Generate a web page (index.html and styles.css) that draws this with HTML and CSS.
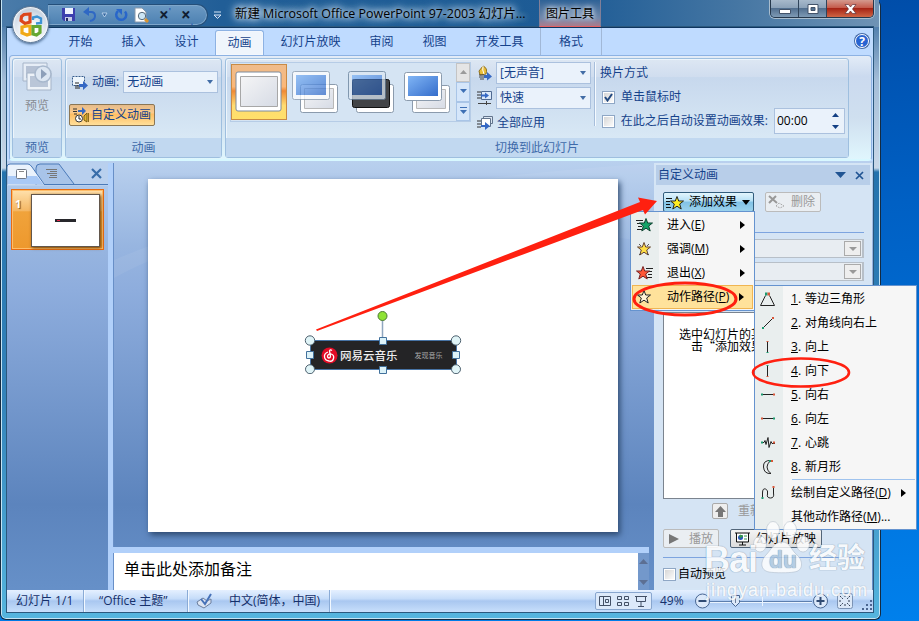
FILE: index.html
```html
<!DOCTYPE html>
<html lang="zh-CN">
<head>
    <meta charset="utf-8">
    <title>PowerPoint</title>
    <link rel="stylesheet" href="styles.css">
</head>
<body>
<div class="desktop">
    <div class="window">
        <div class="title-bar">
            <div class="quick-bar">
                <svg width="16" height="16"><path d="M1 1h13v13H3l-2-2z" fill="#3b3fae"/><path d="M4 1h8v6H4z" fill="#eef3ff"/><path d="M4 10h7v4H4z" fill="#c5cbe8"/><path d="M5 11h2v3H5z" fill="#222a66"/></svg>
                <svg width="14" height="16"><path d="M3 5h5q4 0 4 4t-5 5" fill="none" stroke="#2f68c4" stroke-width="2"/><path d="M0 5l6-5v9z" fill="#2f68c4"/></svg>
                <svg class="drop" width="7" height="6"><path d="M1 1h5L3.500 5z" fill="#34659f" stroke="#c5dcf2" stroke-width=".8"/></svg>
                <svg width="14" height="16"><path d="M11 4.500A5 5 0 1 1 4 4" fill="none" stroke="#2866ca" stroke-width="2.500"/><path d="M2 2h6v6z" fill="#2866ca"/></svg>
                <svg width="16" height="16"><path d="M1 1h7l4 4v10H1z" fill="#fff" stroke="#8898aa"/><circle cx="8" cy="9" r="3.700" fill="#cce5f4" stroke="#596b7b"/><path d="M11 12l3 3" stroke="#d79432" stroke-width="3"/></svg>
                <span class="script-x first">×<sup>'</sup></span>
                <span class="script-x">×<sub>.</sub></span>
            </div>
            <svg class="more" width="9" height="9"><path d="M1 1h7M1 4h7L4.500 7.500z" fill="#34659f" stroke="#d5e5f5"/></svg>
            <div class="caption">新建 Microsoft Office PowerPoint 97-2003 幻灯片...</div>
            <div class="context-title">图片工具</div>
            <div class="window-buttons">
                <span class="min"><svg width="12" height="10"><path d="M.5 5.500h11v4H.5z" fill="#fff" stroke="#43536a"/></svg></span>
                <span class="max"><svg width="12" height="10"><path d="M1 .5h10v9H1zM4 3.500h4v3H4z" fill="#fff" fill-rule="evenodd" stroke="#43536a"/></svg></span>
                <span class="close"><svg width="13" height="10"><path d="M1 .5h3.500l2 2.500 2-2.500H12L8.500 5 12 9.500H8.500l-2-2.500-2 2.500H1L4.500 5z" fill="#fff" stroke="#603038" stroke-width=".7"/></svg></span>
            </div>
        </div>
        <div class="client">
            <div class="tabs">
                <span class="tab">开始</span>
                <span class="tab">插入</span>
                <span class="tab">设计</span>
                <span class="tab active">动画</span>
                <span class="tab">幻灯片放映</span>
                <span class="tab">审阅</span>
                <span class="tab">视图</span>
                <span class="tab">开发工具</span>
                <span class="tab context">格式</span>
                <span class="help">?</span>
            </div>
            <div class="ribbon">
                <div class="group preview">
                    <div class="group-body">
                        <svg width="31" height="30"><path d="M1 1h24v18H1z" fill="#e6edf6" stroke="#a5b4c8"/><path d="M4 4h18v12H4z" fill="#b5c1d4"/><path d="M5 11h24v17H5z" fill="#edf2f8" stroke="#a5b4c8"/><path d="M8 14h18v11H8z" fill="#bac6d8"/><circle cx="21" cy="12" r="8" fill="#dce6f2" stroke="#a8b8cd" stroke-width="1.500"/><path d="M19 7l6 5-6 5z" fill="#8d9fb9"/></svg>
                        <span>预览</span>
                    </div>
                    <div class="group-label">预览</div>
                </div>
                <div class="group animation">
                    <div class="group-body">
                        <div class="line">
                            <svg width="17" height="16"><path d="M1.500 2.500h12v9h-12z" fill="#eef6fd" stroke="#375c8c" stroke-dasharray="2 1"/><path d="M4 9h4M4 12h4M4 14h5" stroke="#222"/><path d="M8 10h4V7l5 4.500-5 4.500v-3H8z" fill="#3568c4"/></svg>
                            <span>动画:</span>
                            <div class="select anim-select">无动画<i></i></div>
                        </div>
                        <div class="custom-button">
                            <svg width="17" height="16"><path d="M0 2h4M0 4.500h4M1 7h3" stroke="#333"/><path d="M5 3h4V0l4 4-4 4V5H5z" fill="#3568c4"/><circle cx="6" cy="11.500" r="3.500" fill="#fff" stroke="#333"/><path d="M6 9v3h2" fill="none" stroke="#222"/><path d="M11 9l3-3v9l-3-2z" fill="#e2b72f" stroke="#7a5c15"/><path d="M15.500 6v9" stroke="#8e6d1a"/></svg>
                            <span>自定义动画</span>
                        </div>
                    </div>
                    <div class="group-label">动画</div>
                </div>
                <div class="group transition">
                    <div class="group-body">
                        <div class="gallery">
                            <div class="thumb picked"><svg width="48" height="44"><rect x="1" y="2" width="45" height="39" rx="2" fill="#fff" stroke="#7d8b9d"/><path d="M5.500 6.500h37v30h-37z" fill="url(#paper)" stroke="#a7a7a7"/></svg></div>
                            <svg class="thumb-art" width="48" height="44"><rect x="9.500" y="14.500" width="37" height="28" rx="2" fill="#fff" stroke="#8b9bad"/><path d="M13.500 18.500h29v20h-29z" fill="url(#paper)" stroke="#b8b8b8"/><g opacity=".75"><rect x="1.500" y="1.500" width="37" height="28" rx="2" fill="#fff" stroke="#8b9bad"/><path d="M5 5h30v20H5z" fill="url(#blue)"/></g></svg>
                            <svg class="thumb-art" width="48" height="44"><rect x="9.500" y="14.500" width="37" height="28" rx="2" fill="#fff" stroke="#8b9bad"/><rect x="5.500" y="9.500" width="37" height="28" rx="2" fill="#424447" stroke="#111"/><g opacity=".75"><rect x="1.500" y="1.500" width="37" height="28" rx="2" fill="#dce7f2" stroke="#667f99"/><path d="M5 5h30v20H5z" fill="url(#blue)"/><path d="M5 9h30v16H5z" fill="#1d427b" opacity=".5"/></g></svg>
                            <svg class="thumb-art" width="48" height="44"><rect x="9.500" y="15.500" width="37" height="27" rx="2" fill="#fff" stroke="#8b9bad"/><path d="M13.500 19.500h29v19h-29z" fill="url(#paper)" stroke="#b8b8b8"/><rect x="1.500" y="2.500" width="37" height="28" rx="2" fill="#fff" stroke="#8b9bad"/><path d="M5 6h30v20H5z" fill="url(#blue)"/></svg>
                            <div class="gallery-scroll">
                                <span class="off"><svg width="7" height="5"><path d="M0 4l3.500-4L7 4z" fill="#9b9b9b"/></svg></span>
                                <span><svg width="7" height="5"><path d="M0 0h7L3.500 4z" fill="#3e70b5"/></svg></span>
                                <span><svg width="7" height="8"><path d="M0 .5h7" stroke="#3e70b5"/><path d="M0 3h7L3.500 7z" fill="#3e70b5"/></svg></span>
                            </div>
                        </div>
                        <div class="options">
                            <div class="line">
                                <svg width="16" height="16"><path d="M2 6l4-5q5 2 3 8l-6 1z" fill="#e9bd38" stroke="#8e6f1d"/><path d="M6 1q-1 4 1 8" fill="none" stroke="#fff"/><path d="M2 10h5M2 12h5M3 14h4" stroke="#444"/><path d="M7 10h3V7l5 4.500-5 4V13H7z" fill="#3568c4"/></svg>
                                <div class="select">[无声音]<i></i></div>
                            </div>
                            <div class="line">
                                <svg width="16" height="16"><path d="M0 2h4M0 5h4M0 8h4" stroke="#333"/><path d="M4.500 1.500h10v8h-10z" fill="#dbe9fa" stroke="#506a91"/><path d="M4 4.500h4V2.500l4 3-4 3v-2H4z" fill="#3568c4"/><path d="M1 13.500h13M9.500 11v4" stroke="#444"/></svg>
                                <div class="select">快速<i></i></div>
                            </div>
                            <div class="line apply">
                                <svg width="17" height="16"><path d="M6.500 1.500h9v7h-9z" fill="#dbe6f2" stroke="#62748c"/><path d="M4.500 3.500h9v8h-9z" fill="#fff" stroke="#62748c"/><path d="M0 6h4M0 9h4M0 12h4" stroke="#333"/><path d="M4 10h4V7l5 4-5 4v-3H4z" fill="#3568c4"/></svg>
                                <span>全部应用</span>
                            </div>
                        </div>
                        <div class="advance">
                            <div>换片方式</div>
                            <div class="line"><span class="check"><svg width="9" height="9"><path d="M1 4l2.500 3.500L8 1" fill="none" stroke="#234a80" stroke-width="2"/></svg></span>单击鼠标时</div>
                            <div class="line"><span class="check"></span><span>在此之后自动设置动画效果:</span>
                                <div class="time">00:00<svg width="7" height="17"><path d="M0 4l3.500-4L7 4zM0 12h7l-3.500 4z" fill="#123f84"/></svg></div>
                            </div>
                        </div>
                    </div>
                    <div class="group-label">切换到此幻灯片</div>
                </div>
            </div>
            <div class="workspace">
                <div class="slides">
                    <div class="slides-tabs">
                        <svg width="101" height="22"><path d="M29 21.500V5q0-4 4-4h19l15 20" fill="#a8c4e9" stroke="#4a7ab9"/><path d="M0 21.500V4q0-3 3-3h18q2 0 4 3l12 17" fill="#eaf2fc" stroke="#4a7ab9"/><path d="M1 13h29l6 8H1z" fill="#a9c9f6"/><rect x="9.500" y="6.500" width="10" height="9" rx="1" fill="#fff" stroke="#6f7887"/><path d="M12 8.500h5" stroke="#888"/><path d="M39 6.500h11M43 8.500h7M40 10.500h10M43 12.500h7M42 14.500h8" stroke="#777"/><path d="M37 21.500h64" stroke="#4a7ab9"/><path d="M85 6l9 9M94 6l-9 9" stroke="#376da9" stroke-width="2.200"/></svg>
                    </div>
                    <div class="slide-item">
                        <b>1</b>
                        <div class="mini"><span><i></i></span></div>
                    </div>
                </div>
                <div class="editor">
                    <div class="canvas">
                        <svg class="waves" width="540" height="384"><path d="M0 97Q160 27 540 0v80Q170 20 0 115z" fill="#fff" opacity=".06"/></svg>
                        <div class="slide">
                            <div class="banner">
                                <svg width="17" height="17"><circle cx="8.500" cy="8.500" r="8" fill="#e20b25"/><path d="M11 3.500Q9 2 8.500 4l1 5q0 2-1.500 2T6.500 9Q7 6.500 10 7q3.500 1 2.500 4.500T8 14Q4 13.500 3.500 10T7 5" fill="none" stroke="#fff" stroke-width="1.300"/></svg>
                                <b>网易云音乐</b>
                                <small>发现音乐</small>
                                <svg class="handles" width="158" height="66"><path d="M78.500 12v24" stroke="#8fa6bf" stroke-width="1.500"/><path d="M6.500 32.500h146v29h-146z" fill="none" stroke="#4773a5"/><circle cx="78.500" cy="8" r="4.500" fill="#8fe335" stroke="#4c7a33"/><g fill="#e0f4f7" stroke="#4d606e"><circle cx="6" cy="32.500" r="4.700"/><circle cx="152" cy="32.500" r="4.700"/><circle cx="6" cy="61.200" r="4.500"/><circle cx="152" cy="61.200" r="4.500"/></g><path d="M75.500 29.500h7v7h-7zM75.500 58.500h7v7h-7zM2.500 43.500h7v7h-7zM148.500 43.500h7v7h-7z" fill="#dcf2f8" stroke="#42719c"/></svg>
                            </div>
                        </div>
                    </div>
                    <div class="notes">
                        <div class="notes-text">单击此处添加备注</div>
                        <div class="notes-scroll">
                            <svg width="9" height="5"><path d="M0 5l4.500-5L9 5z" fill="#5c6f93"/></svg>
                            <svg width="9" height="5"><path d="M0 0h9L4.500 5z" fill="#5c6f93"/></svg>
                        </div>
                    </div>
                </div>
                <div class="pane">
                    <div class="pane-head">
                        <span>自定义动画</span>
                        <svg width="11" height="6"><path d="M0 0h11L5.500 6z" fill="#205493"/></svg>
                        <svg width="9" height="9"><path d="M1 1l7 7M8 1L1 8" stroke="#205493" stroke-width="1.700"/></svg>
                    </div>
                    <div class="pane-body">
                        <div class="pane-buttons">
                            <div class="add"><svg width="18" height="15"><path d="M0 3.500h6M0 6.500h4M0 9.500h4M0 12.500h5" stroke="#111"/><use href="#star" x="4" y="1" fill="#ffed23" stroke="#222"/></svg><span>添加效果</span><svg width="8" height="5"><path d="M0 0h8L4 5z"/></svg></div>
                            <div class="grey-button"><svg width="17" height="14"><path d="M1 1l8 7M8 1L1 8" stroke="#999" stroke-width="2"/><path d="M8 11l3-3 5 3-4 2z" fill="none" stroke="#aaa" stroke-dasharray="2 1"/></svg><span>删除</span></div>
                        </div>
                        <div class="combo first"><span><i></i></span></div>
                        <div class="combo"><span><i></i></span></div>
                        <div class="combo"><span><i></i></span></div>
                        <div class="list"><p>选中幻灯片的某</p><p>击“添加效果</p></div>
                        <div class="reorder"><span class="arrow"><svg width="11" height="11"><path d="M5.500 0l5.500 6H8v5H3V6H0z" fill="#777"/></svg></span><span>重新</span></div>
                        <div class="play-row">
                            <div class="grey-button play"><svg width="10" height="10"><path d="M0 0l10 5-10 5z" fill="#777"/></svg><span>播放</span></div>
                            <div class="show"><svg width="17" height="14"><path d="M3 2h11v7H3z" fill="#fff"/><path d="M1 1h15M2.500 1v9h12V1M8.500 10v3M5 13h7" fill="none" stroke="#111"/><circle cx="6.500" cy="5.500" r="2.500" fill="#2752bb"/><path d="M6 3l3 1-3 2zM10 4h3M10 7h3" fill="#35a055" stroke="#34924a"/></svg><span>幻灯片放映</span></div>
                        </div>
                        <div class="auto"><span class="check"></span>自动预览</div>
                    </div>
                </div>
            </div>
            <div class="status">
                <span class="cell page">幻灯片 1/1</span>
                <span class="cell theme">“Office 主题”</span>
                <span class="cell lang"><svg width="17" height="16"><path d="M1 9l6-4 4 3 4-2v4l-7 5-6-3z" fill="#dce4f2" stroke="#6c7f9e"/><path d="M5 6l4 5 6-10" fill="none" stroke="#4772b8" stroke-width="2"/></svg>中文(简体，中国)</span>
                <span class="views">
                    <svg width="18" height="16"><path d="M3.500 3.500h11v9h-11zM7.500 3.500v9M9.500 6.500h3v3h-3z" fill="none" stroke="#435066"/></svg>
                    <svg width="18" height="16"><path d="M3.500 3.500h4v3h-4zM10.500 3.500h4v3h-4zM3.500 9.500h4v3h-4zM10.500 9.500h4v3h-4z" fill="none" stroke="#435066"/></svg>
                    <svg width="19" height="16"><path d="M3 3.500h12M4.500 3.500v5h9v-5M9 9v4M6 13.500h6" fill="none" stroke="#435066"/></svg>
                </span>
                <span class="percent">49%</span>
                <svg class="zoom" width="134" height="18"><path d="M16 9.500h102" stroke="#5d7fae"/><path d="M16 10.500h102" stroke="#e9f3ff"/><path d="M68.500 5v9" stroke="#e9f3ff"/><g fill="#dce9fa" stroke="#486692"><circle cx="8.500" cy="9" r="7"/><circle cx="126.500" cy="9" r="7"/><path d="M37.500 3.500h8v7l-4 4-4-4z"/></g><path d="M4.500 9h8M122.500 9h8M126.500 5v8" stroke="#304b73" stroke-width="2"/><path d="M41.500 6v5" stroke="#6c7e9a"/></svg>
                <svg width="16" height="16"><rect x=".5" y=".5" width="15" height="15" rx="2" fill="#dce8f7" stroke="#7b93b5"/><path d="M3 3l3 3M13 3l-3 3M3 13l3-3M13 13l-3-3M8 2v3M8 11v3M2 8h3M11 8h3" stroke="#303d52" stroke-dasharray="2 1"/></svg>
                <svg class="grip" width="12" height="12"><path d="M9 2h2M5 6h2M9 6h2M1 10h2M5 10h2M9 10h2" stroke="#4b6691" stroke-width="2"/></svg>
            </div>
        </div>
        <div class="office-button">
            <svg width="24" height="26"><g fill="none" stroke-width="3.200"><path d="M5 2.500l6-.5v8l-5 1.500-4-3 .5-4z" stroke="#dc471d"/><path d="M14 8V5.500l4-1 4 2v4.500l-5 .5" stroke="#3d93d4" stroke-width="2.400"/><path d="M8 14l-5 1v6l5 2 3-1v-8z" stroke="#f0a918"/><path d="M14 14.500h7v6l-3.500 2.500-3.500-1z" stroke="#65a833"/></g></svg>
        </div>
    </div>

    <div class="menu main-menu">
        <div class="item"><span class="icon"><svg width="18" height="15"><path d="M0 2.500h7M1 5.500h5M2 8.500h4M1 11.500h5" stroke="#222"/><use href="#star" x="3" y="0" fill="#14a368" stroke="#143"/></svg></span>进入(<u>E</u>)<i></i></div>
        <div class="item"><span class="icon"><svg width="18" height="15"><use href="#star" x="1" y="0" fill="#ffdf46" stroke="#643"/><path d="M3 2l2 2M13 2l-2 2M3 13l2-2M13 13l-2-2" stroke="#555"/></svg></span>强调(<u>M</u>)<i></i></div>
        <div class="item"><span class="icon"><svg width="18" height="15"><path d="M10 2.500h7M11 5.500h5M12 8.500h4M10 11.500h6" stroke="#222"/><use href="#star" x="0" y="0" fill="#ff5636" stroke="#722"/></svg></span>退出(<u>X</u>)<i></i></div>
        <div class="item hot"><span class="icon"><svg width="18" height="15"><use href="#star" x="1" y="0" fill="#fff3d6" stroke="#222"/></svg></span>动作路径(<u>P</u>)<i></i></div>
    </div>

    <div class="menu sub-menu">
        <div class="item"><span class="icon"><svg width="16" height="16"><path d="M5.500 4.500L.500 14.500h14l-5-10" fill="none" stroke="#222"/><path d="M5 3h2.500" stroke="#1c9b70" stroke-width="3"/><path d="M7.500 3H10" stroke="#d95638" stroke-width="3"/></svg></span><u>1</u>.<span class="name">等边三角形</span></div>
        <div class="item"><span class="icon"><svg width="16" height="16"><path d="M3 13L13 3" stroke="#222"/><path d="M2 13h2" stroke="#1c9b70" stroke-width="2"/><path d="M12 3h2" stroke="#d95638" stroke-width="2"/></svg></span><u>2</u>.<span class="name">对角线向右上</span></div>
        <div class="item"><span class="icon"><svg width="16" height="16"><path d="M7.500 2v12" stroke="#222"/><path d="M6.500 2.500h2" stroke="#d95638"/><path d="M6.500 13.500h2" stroke="#1c9b70"/></svg></span><u>3</u>.<span class="name">向上</span></div>
        <div class="item"><span class="icon"><svg width="16" height="16"><path d="M7.500 2v12" stroke="#222"/><path d="M6.500 2.500h2" stroke="#1c9b70"/><path d="M6.500 13.500h2" stroke="#d95638"/></svg></span><u>4</u>.<span class="name">向下</span></div>
        <div class="item"><span class="icon"><svg width="16" height="16"><path d="M2 7.500h12" stroke="#222"/><path d="M1 7.500h2" stroke="#1c9b70" stroke-width="2"/><path d="M13 7.500h2" stroke="#d95638" stroke-width="2"/></svg></span><u>5</u>.<span class="name">向右</span></div>
        <div class="item"><span class="icon"><svg width="16" height="16"><path d="M2 7.500h12" stroke="#222"/><path d="M1 7.500h2" stroke="#d95638" stroke-width="2"/><path d="M13 7.500h2" stroke="#1c9b70" stroke-width="2"/></svg></span><u>6</u>.<span class="name">向左</span></div>
        <div class="item"><span class="icon"><svg width="16" height="16"><path d="M1 7.500h3l1-2 1 4 2-7 1 10 2-6 1 2h3" fill="none" stroke="#222"/><path d="M1 7.500h2" stroke="#1c9b70" stroke-width="2"/><path d="M13 7.500h2" stroke="#d95638" stroke-width="2"/></svg></span><u>7</u>.<span class="name">心跳</span></div>
        <div class="item"><span class="icon"><svg width="16" height="16"><path d="M11 1.500Q3 1 3.500 8T11 14.500Q7 12 7 8t4-6.500z" fill="none" stroke="#222"/><path d="M9 2h2" stroke="#1c9b70" stroke-width="2"/><path d="M11 2h2" stroke="#d95638" stroke-width="2"/></svg></span><u>8</u>.<span class="name">新月形</span></div>
        <div class="divider"></div>
        <div class="item"><span class="icon"><svg width="16" height="16"><path d="M2.500 13V8q0-5 3-4t2 5 3 4 3-5V2" fill="none" stroke="#222"/><path d="M1.500 13h2" stroke="#1c9b70" stroke-width="2"/><path d="M12.500 2h2" stroke="#d95638" stroke-width="2"/></svg></span>绘制自定义路径(<u>D</u>)<i></i></div>
        <div class="item"><span class="icon"></span>其他动作路径(<u>M</u>)...</div>
    </div>

    <div class="watermark">
        <svg width="60" height="54"><g fill="#fff" stroke="#a9b6c3" stroke-width=".6"><ellipse cx="20" cy="9" rx="6.500" ry="8.500"/><ellipse cx="37" cy="9" rx="6.500" ry="8.500"/><ellipse cx="7" cy="23" rx="6.500" ry="8"/><ellipse cx="50" cy="23" rx="6.500" ry="8"/><path d="M29 21c8 0 9 8 15 13s7 16-3 17c-5 1-19 1-25 0-10-2-8-12-3-17s8-13 16-13z"/></g></svg>
        <span class="bai">Bai</span><span class="du">du</span><span class="jingyan">经验</span>
        <span class="url">jingyan.baidu.com</span>
    </div>

    <!-- red marks -->
    <svg class="marks" width="919" height="621">
        <path d="M316 329.500L640 202l-2-4.500 19 3.500-12 13.500-2-4.500L317 331z" fill="#ff2010"/>
        <ellipse cx="685" cy="299" rx="51" ry="16" fill="none" stroke="#ff2010" stroke-width="3"/>
        <ellipse cx="801" cy="372.500" rx="48" ry="14" fill="none" stroke="#ff2010" stroke-width="2.600"/>
    </svg>
</div>

<svg class="defs" width="0" height="0">
    <defs>
        <linearGradient id="paper" x2="1" y2="1"><stop stop-color="#f5f5f6"/><stop offset="1" stop-color="#d6dbe5"/></linearGradient>
        <linearGradient id="blue" x2="1" y2="1"><stop stop-color="#80b5f5"/><stop offset="1" stop-color="#356dcb"/></linearGradient>
        <path id="star" d="M7 .5l1.700 4.500h4.800l-3.800 3 1.500 5L7 10.200 2.800 13l1.500-5L.5 5h4.800z"/>
    </defs>
</svg>
</body>
</html>
```
FILE: styles.css
```css
* {
    box-sizing: border-box;
}
body {
    margin: 0;
    overflow: hidden;
    font: 12px/16px "Open Sans", "Noto Sans CJK SC", sans-serif;
    color: #15428b;
    white-space: nowrap;
}
svg {
    flex: none;
    display: block;
}
i {
    font-style: normal;
}
.desktop {
    position: relative;
    width: 919px;
    height: 621px;
    overflow: hidden;
    background: linear-gradient(175deg, #00469f, #0060c4 40%, #0080ec);
}
.defs {
    position: absolute;
}
.window {
    position: relative;
    width: 881px;
    height: 620px;
    padding: 0 8px 8px 6px;
    border: 1px solid #142b42;
    border-top: 0;
    border-radius: 0 6px 6px 6px;
    background: linear-gradient(#2a6299, #a4bdd8 80px, #c9d8e8 168px, #2573ad 172px, #3484bb 400px, #55b5de);
    box-shadow: inset 0 0 0 1px #c5e4f4;
}

/* 标题栏 */
.title-bar {
    display: flex;
    height: 27px;
    margin: 0 -7px 0 -5px;
    padding-left: 46px;
    background: linear-gradient(90deg, #4a7ba9, #215e97 25%, #1d5b95 65%, #4878a4 85%, #6f93b5);
}
.quick-bar {
    display: flex;
    align-items: center;
    gap: 6px;
    width: 160px;
    height: 22px;
    margin-top: 4px;
    padding: 0 5px 0 13px;
    border: 1px solid #244f7a;
    border-left: 0;
    border-radius: 0 11px 11px 0;
    background: linear-gradient(#6c9ac4, #4c80b1);
    box-shadow: inset 0 0 0 1px #7ea6ca;
}
.quick-bar .drop {
    margin-left: -2px;
}
.script-x {
    width: 16px;
    font-size: 17px;
    font-weight: bold;
    line-height: 16px;
    color: #101d31;
}
.script-x.first {
    margin-left: 3px;
}
.script-x sup, .script-x sub {
    font-size: 8px;
    line-height: 0;
    color: #2653ab;
}
.more {
    margin: 11px 0 0 5px;
}
.caption {
    width: 296px;
    margin-left: 10px;
    padding-left: 3px;
    font-size: 12.450px;
    line-height: 27px;
    color: #000;
    text-shadow: 0 0 6px #fff, 0 0 9px #cbe1f4, 0 0 12px #cbe1f4;
}
.context-title {
    width: 62px;
    margin-left: 11px;
    border: 1px solid #817f98;
    border-width: 0 1px;
    border-bottom: 1px solid #e45f61;
    background: linear-gradient(#2f6296, #7088ab 70%, #a37d90 95%);
    line-height: 27px;
    text-align: center;
    color: #000;
    text-shadow: 0 0 5px #fff, 0 0 7px #e5eef8;
}
.window-buttons {
    display: flex;
    width: 104px;
    height: 18px;
    margin: 0 5px 0 auto;
    border: 1px solid #26384c;
    border-top: 0;
    border-radius: 0 0 5px 5px;
    box-shadow: 0 0 0 1px #a9bdce;
    overflow: hidden;
}
.window-buttons span {
    display: flex;
    align-items: center;
    justify-content: center;
    width: 28px;
    background: linear-gradient(#a7b9cb, #8ca2b9 45%, #526f8f 50%, #7e9ab5);
    border-right: 1px solid #30445b;
}
.window-buttons .close {
    flex: 1;
    border: 0;
    background: linear-gradient(#d49a8e, #c55b4b 45%, #a62415 50%, #cf6544);
}
.office-button {
    position: absolute;
    left: 11px;
    top: 6px;
    display: flex;
    align-items: center;
    justify-content: center;
    width: 37px;
    height: 37px;
    border: 1px solid #607995;
    border-radius: 50%;
    background: radial-gradient(circle at 50% 70%, #fff 20%, #d4dde8 60%, #9fb1c5);
    box-shadow: inset 0 0 2px 1px #fff, 0 1px 3px #35577d;
}

/* 功能区 */
.client {
    width: 866px;
    height: 585px;
    border-top: 1px solid #0e3560;
    background: #bfdbff;
    box-shadow: 0 0 0 1px #2b587d;
}
.tabs {
    display: flex;
    height: 27px;
    padding-left: 47px;
    line-height: 28px;
}
.tab {
    padding: 0 14.500px;
}
.tab.active {
    height: 25px;
    margin: 2px 2px 0;
    padding: 0 11.500px;
    border: 1px solid #8db2e3;
    border-bottom: 0;
    border-radius: 3px 3px 0 0;
    background: #eff5fc;
    line-height: 23px;
    box-shadow: inset 0 0 2px #fff;
}
.tab.context {
    width: 62px;
    margin-left: 2px;
    border: 1px solid #a1b8d7;
    border-width: 0 1px;
    text-align: center;
}
.help {
    width: 14px;
    height: 14px;
    margin: 6px 4px 0 auto;
    border: 1px solid #fff;
    border-radius: 50%;
    background: #2864d2;
    box-shadow: 0 0 0 1px #456ba8;
    color: #fff;
    font-weight: bold;
    line-height: 13px;
    text-align: center;
}
.ribbon {
    display: flex;
    gap: 3px;
    height: 106px;
    margin: 0 1px 0 2px;
    padding: 2px;
    border: 1px solid #8db2e3;
    border-bottom: 2px solid #d8f8ff;
    border-radius: 4px;
    background: linear-gradient(#e3ecf7, #cbdaef 20%, #cfdfef 60%, #e0f6fd);
}
.group {
    height: 100px;
    border: 1px solid #9ebfdf;
    border-radius: 3px;
    background: linear-gradient(#dde7f3, #d0ddef 18%, #c7d8ed 19%, #d8e8f5 80%);
    box-shadow: inset 1px 1px 0 #edf5fc;
}
.group-body {
    height: 79px;
}
.group-label {
    height: 19px;
    background: #c1d8f0;
    color: #3e6aaa;
    line-height: 19px;
    text-align: center;
}
.preview {
    width: 50px;
}
.preview .group-body {
    display: flex;
    flex-direction: column;
    align-items: center;
    padding-top: 3px;
    gap: 6px;
    color: #888c93;
}
.animation {
    width: 157px;
}
.line {
    display: flex;
    align-items: center;
    gap: 4px;
}
.animation .group-body {
    padding: 12px 3px 0 5px;
}
.select {
    display: flex;
    align-items: center;
    justify-content: space-between;
    width: 95px;
    height: 22px;
    padding: 0 4px 0 3px;
    border: 1px solid #abc1de;
    background: #eaf2fb;
}
.select i {
    border: 3px solid transparent;
    border-top: 4px solid #426da6;
    border-bottom: 0;
}
.custom-button {
    display: flex;
    align-items: center;
    gap: 1px;
    width: 86px;
    height: 22px;
    margin: 11px 0 0 -2px;
    padding-left: 3px;
    border: 1px solid #8b7654;
    border-radius: 2px;
    background: linear-gradient(#e5bb8a, #fccb8b 40%, #ffbd62 45%, #ffdf9a);
}
.transition {
    width: 624px;
}
.transition .group-body {
    display: flex;
    padding: 3px 0 0 4px;
}
.gallery {
    display: flex;
    align-items: center;
    width: 241px;
    height: 60px;
    border: 1px solid #b6cce6;
    background: #d5e4f3;
}
.thumb {
    display: flex;
    align-items: center;
    justify-content: center;
    width: 56px;
    height: 56px;
    border: 1px solid #c98b45;
    background: linear-gradient(#efbc8c, #fbb878 40%, #f08a35 48%, #ffdc72 75%, #ffe06a);
}
.thumb-art {
    margin-left: 4px;
    margin-right: 4px;
}
.gallery-scroll {
    display: flex;
    flex-direction: column;
    width: 14px;
    height: 58px;
    margin-left: auto;
}
.gallery-scroll span {
    display: flex;
    flex: 1;
    align-items: center;
    justify-content: center;
    border: 1px solid #a9c5e7;
    background: #d5e6fa;
}
.gallery-scroll .off {
    background: #e5e5e5;
    border-color: #c4c4c4;
}
.options {
    display: flex;
    flex-direction: column;
    gap: 3px;
    width: 124px;
    padding-left: 6px;
}
.options .line {
    height: 22px;
}
.options .line:not(.apply) {
    gap: 3px;
}
.options .apply {
    gap: 3px;
}
.advance {
    display: flex;
    flex-direction: column;
    gap: 8px;
    width: 250px;
    height: 64px;
    padding: 3px 0 0 4px;
    border-left: 1px solid #f5faff;
    box-shadow: -1px 0 0 #a7bedb;
}
.advance .line {
    height: 16px;
    gap: 6px;
}
.advance .check {
    margin-left: 2px;
}
.check {
    display: flex;
    align-items: center;
    justify-content: center;
    width: 13px;
    height: 13px;
    border: 1px solid #8fa7c5;
    background: linear-gradient(135deg, #d3d3d3, #fff);
    box-shadow: inset 0 0 0 1px #fff;
}
.time {
    display: flex;
    flex: none;
    align-items: center;
    justify-content: space-between;
    width: 71px;
    height: 26px;
    padding: 0 5px 0 2px;
    border: 1px solid #abc1de;
    background: #eaf2fb;
    color: #000;
}

/* 工作区 */
.workspace {
    display: flex;
    height: 429px;
    padding-top: 2px;
    background: linear-gradient(#b9d0ee, #97b5e0 20%, #8eaddd 30%, #5c84bd 80%, #6690c8);
}
.slides {
    width: 101px;
}
.slides-tabs {
    width: 101px;
    height: 23px;
    background: #b9d0ee;
}
.slide-item {
    display: flex;
    width: 93px;
    height: 61px;
    margin: 3px 0 0 4px;
    padding: 4px 3px 2px 3px;
    border: 1px solid #e66c13;
    background: linear-gradient(#ffe1ad, #f4b764 35%, #f0a33b 37%, #ed982d);
    box-shadow: inset 0 0 0 1px #ffbd68;
}
.slide-item b {
    width: 16px;
    padding-top: 2px;
    font-size: 11px;
    color: #fff;
    text-shadow: 1px 1px 1px #754b18;
}
.mini {
    display: flex;
    align-items: center;
    justify-content: center;
    width: 69px;
    height: 53px;
    border: 1px solid #62564b;
    background: #fff;
    box-shadow: 1px 1px 3px #70420a;
}
.mini span {
    width: 21px;
    height: 3px;
    background: #28282c;
}
.mini i {
    display: block;
    width: 3px;
    height: 1px;
    margin: 1px 2px;
    background: #e3274b;
}
.editor {
    width: 541px;
    border-left: 5px solid #b1d0fa;
    box-shadow: inset 1px 0 0 #688fc7;
}
.canvas {
    display: grid;
    place-items: start;
    height: 384px;
    padding: 16px 0 0 35px;
}
.waves {
    position: absolute;
    margin: -16px 0 0 -34px;
}
.slide {
    position: relative;
    display: flex;
    align-items: flex-start;
    width: 470px;
    height: 353px;
    padding: 162px 0 0 162px;
    background: #fff;
    box-shadow: 2px 3px 6px #2d496f;
}
.banner {
    position: relative;
    display: flex;
    align-items: center;
    width: 147px;
    height: 29px;
    padding-left: 11px;
    background: #242426;
    color: #eee;
}
.banner b {
    margin-left: 2px;
    font-size: 11.500px;
    font-weight: 500;
}
.banner small {
    margin-left: 17px;
    font-size: 7px;
    color: #aaa;
}
.handles {
    position: absolute;
    left: -6px;
    top: -33px;
}
.notes {
    display: flex;
    height: 43px;
    border-top: 6px solid #b1d0fa;
    box-shadow: inset 0 1px 0 #6991c6;
}
.notes-text {
    width: 524px;
    margin-left: 1px;
    padding: 5px 0 0 10px;
    background: #fff;
    color: #000;
    font-size: 16px;
    line-height: 23px;
}
.notes-scroll {
    display: flex;
    flex: 1;
    flex-direction: column;
    align-items: center;
    justify-content: space-between;
    padding: 6px 0 5px;
    background: #7398cb;
}
.pane {
    width: 218px;
    margin-left: 5px;
    border: 2px solid #d5e5f5;
    background: #d5e4f4;
    color: #000;
}
.pane-head {
    display: flex;
    align-items: center;
    height: 20px;
    padding: 0 6px 0 2px;
    background: #b8cee9;
    color: #15428b;
}
.pane-head span {
    flex: 1;
}
.pane-head svg + svg {
    margin-left: 9px;
}
.pane-body {
    padding: 7px 6px 0 7px;
}
.pane-buttons {
    display: flex;
    gap: 11px;
    height: 41px;
    border-bottom: 1px solid #7da4df;
}
.add, .grey-button {
    display: flex;
    align-items: center;
    height: 20px;
    border: 1px solid #bbb;
    border-radius: 2px;
    background: #eaeef2;
    color: #999;
}
.add {
    width: 91px;
    padding-left: 2px;
    gap: 5px;
    border: 1px solid #335d7d;
    background: linear-gradient(#e3f5fd, #b6e0f5 45%, #82c2e6 50%, #9bd2ec);
    color: #000;
}
.grey-button {
    width: 56px;
    gap: 6px;
    padding-left: 2px;
}
.combo {
    display: flex;
    justify-content: flex-end;
    height: 19px;
    margin-top: 4px;
    padding: 1px;
    border: 2px solid #b7bfc8;
    border-width: 1px 2px;
    background: #e8edf2;
}
.combo.first {
    margin-top: 6px;
}
.combo span {
    display: flex;
    align-items: center;
    justify-content: center;
    width: 17px;
    border: 1px solid #aaa;
    background: #eee;
}
.combo i {
    border: 4px solid transparent;
    border-top-color: #999;
    border-bottom: 0;
}
.list {
    height: 187px;
    margin-top: 8px;
    padding: 15px 0 0 15px;
    border: 1px solid #7b848f;
    background: #fff;
    font-family: "Noto Sans CJK SC", sans-serif;
    line-height: 12px;
    overflow: hidden;
}
.list p {
    margin: 0;
}
.list p + p {
    padding-left: 12px;
}
.reorder {
    display: flex;
    gap: 10px;
    margin: 4px 0 0 49px;
    color: #999;
}
.arrow {
    display: flex;
    align-items: center;
    justify-content: center;
    width: 16px;
    height: 16px;
    border: 1px solid #aaa;
    border-radius: 2px;
    background: #eee;
}
.play-row {
    display: flex;
    gap: 11px;
    height: 29px;
    margin-top: 10px;
    border-bottom: 1px solid #7da4df;
}
.play {
    height: 19px;
    padding-left: 5px;
    gap: 10px;
}
.show {
    display: flex;
    align-items: center;
    gap: 5px;
    width: 92px;
    height: 19px;
    padding-left: 3px;
    border: 1px solid #526579;
    border-radius: 2px;
    background: linear-gradient(#f4f4f4, #ddd);
}
.auto {
    display: flex;
    align-items: center;
    gap: 2px;
    margin-top: 8px;
}

/* 状态栏 */
.status {
    display: flex;
    align-items: center;
    height: 22px;
    background: linear-gradient(#e5f0ff, #c5dcf9 40%, #a9c7f0 50%, #c8dffb);
    color: #15306b;
}
.cell {
    display: flex;
    align-items: center;
    height: 22px;
    border-right: 1px solid #8aabd6;
    box-shadow: 1px 0 0 #f2f8ff;
}
.page {
    width: 77px;
    padding-left: 9px;
}
.theme {
    width: 104px;
    padding-left: 15px;
}
.lang {
    width: 142px;
    padding-left: 8px;
    gap: 16px;
}
.views {
    display: flex;
    height: 18px;
    margin-left: auto;
    border: 1px solid #88a6cf;
    border-radius: 2px;
    background: #dce9fa;
}
.percent {
    width: 26px;
    margin: 0 8px;
}
.zoom {
    margin-right: 9px;
}
.grip {
    margin: 7px 0 0 8px;
}

/* 菜单 */
.menu {
    position: absolute;
    padding: 1px;
    border: 1px solid #6593cf;
    background: linear-gradient(90deg, #e9eeee 28px, #f6f6f6 28px);
    color: #000;
}
.main-menu {
    left: 630px;
    top: 211px;
    width: 125px;
    height: 100px;
}
.sub-menu {
    left: 754px;
    top: 285px;
    width: 163px;
    height: 245px;
}
.item {
    display: flex;
    align-items: center;
    height: 24px;
    padding-right: 8px;
}
.item i {
    margin-left: auto;
    border: 4px solid transparent;
    border-left: 5px solid #000;
    border-right: 0;
}
.icon {
    width: 35px;
    padding-left: 4px;
}
.name {
    margin-left: 4px;
}
.hot {
    border: 1px solid #f0b552;
    background: #ffe29b;
}
.hot .icon {
    width: 34px;
    padding-left: 3px;
}
.sub-menu .item {
    padding-right: 9px;
}
.divider {
    height: 1px;
    margin: 0 0 1px 36px;
    background: #9fc3ee;
}

.watermark {
    position: absolute;
    left: 704px;
    top: 521px;
    width: 170px;
    height: 84px;
    opacity: .8;
    color: #fff;
    font-family: "Liberation Sans", "Noto Sans CJK SC", sans-serif;
    font-weight: bold;
    text-shadow: 0 0 1px #7894ae, 0 0 1px #7894ae;
}
.watermark svg, .watermark span {
    position: absolute;
}
.watermark svg {
    left: 49px;
}
.bai {
    left: 0;
    top: 20px;
    font-size: 36px;
    line-height: 37px;
    letter-spacing: -1px;
}
.watermark .du {
    left: 65px;
    top: 28px;
    font-size: 23px;
    line-height: 23px;
    color: #aec8df;
}
.jingyan {
    left: 105px;
    top: 23px;
    font-size: 28px;
    line-height: 30px;
}
.url {
    left: 2px;
    top: 57px;
    font-size: 18px;
    font-weight: normal;
    line-height: 24px;
    letter-spacing: 1px;
    -webkit-text-stroke: .4px #fff;
}
.marks {
    position: absolute;
    left: 0;
    top: 0;
}
```
